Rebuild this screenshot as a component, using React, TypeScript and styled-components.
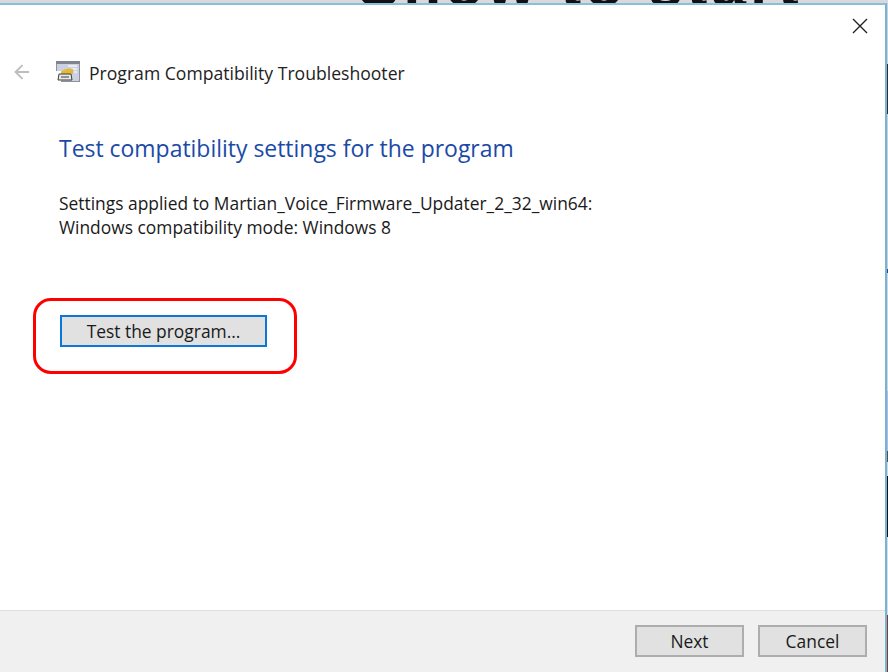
import { ArrowLeft } from 'lucide-react';
import styled, { createGlobalStyle } from 'styled-components';

type ButtonProps = {
  $focused?: boolean;
};

const stripPhotos = [
  { height: 61, color: '#d2d2d2' },
  { height: 50, color: '#3a2c22' },
  { height: 155, color: '#cfcfcf' },
  { height: 4, color: '#2f4a78' },
  { height: 118, color: '#d6d6d6' },
  { height: 60, color: '#b9b8d8' },
  { height: 11, color: '#5c4c44' },
  { height: 14, color: '#d8d8d8' },
  { height: 61, color: '#140f0c' },
  { height: 78, color: '#dcdcdc' },
  { height: 61, color: '#8a3a26' },
];

function App() {
  return (
    <Page>
      <GlobalStyle />
      <TopStrip>
        <TopStripText>Show to start</TopStripText>
      </TopStrip>
      <Middle>
        <Dialog>
          <Content>
            <CloseRow>
              <CloseIcon viewBox="0 0 16 16">
                <path d="M1 1 L15 15 M15 1 L1 15" />
              </CloseIcon>
            </CloseRow>
            <NavRow>
              <BackArrow>
                <ArrowLeft size={22} strokeWidth={2} color="#bdbdbd" />
              </BackArrow>
              <ProgramIcon viewBox="0 0 24 21">
                <rect x="0.5" y="0.5" width="23" height="20" fill="#ccd1e2" stroke="#8d919b" />
                <rect x="0" y="0" width="24" height="3" fill="#7f848e" />
                <path d="M12 5 L21 5 M15 8 L21 8 M18 11 L21 11" stroke="#f2f3fa" strokeWidth="1.5" />
                <rect x="0" y="10" width="5" height="11" fill="#fff" />
                <path d="M5 11 Q10 6 17 8 L17 13 L5 13 Z" fill="#e3b93a" />
                <path d="M3 13 L15 13 L16 19 L2 19 Z" fill="#e9e9e9" stroke="#3c3c3c" />
                <path d="M5 16 L13 16" stroke="#3c3c3c" />
              </ProgramIcon>
              <NavTitle>Program Compatibility Troubleshooter</NavTitle>
            </NavRow>
            <Heading>Test compatibility settings for the program</Heading>
            <Details>
              <div>Settings applied to Martian_Voice_Firmware_Updater_2_32_win64:</div>
              <div>Windows compatibility mode: Windows 8</div>
            </Details>
            <TestArea>
              <Annotation />
              <TestButton $focused>Test the program...</TestButton>
            </TestArea>
          </Content>
          <Footer>
            <FooterButton>Next</FooterButton>
            <FooterButton>Cancel</FooterButton>
          </Footer>
        </Dialog>
        <SideStrip>
          {stripPhotos.map((photo, i) => (
            <SidePhoto key={i} style={{ height: photo.height, background: photo.color }} />
          ))}
        </SideStrip>
      </Middle>
    </Page>
  );
}

const GlobalStyle = createGlobalStyle`
  html, body {
    margin: 0;
    padding: 0;
    background: #fff;
  }
`;

const Page = styled.div`
  display: flex;
  flex-direction: column;
  width: 888px;
  height: 672px;
  overflow: hidden;
  font-family: 'Open Sans', 'Noto Sans', sans-serif;
`;

const TopStrip = styled.div`
  flex: none;
  height: 3px;
  background: #d9d9d9;
  overflow: hidden;
  position: relative;
`;

const TopStripText = styled.div`
  position: absolute;
  left: 358px;
  bottom: -13px;
  font: bold 62px/62px 'Liberation Sans', sans-serif;
  letter-spacing: 4px;
  color: #111;
  white-space: nowrap;
`;

const Middle = styled.div`
  flex: 1;
  display: flex;
  min-height: 0;
`;

const Dialog = styled.div`
  flex: none;
  width: 885px;
  display: flex;
  flex-direction: column;
  border-top: 2px solid #85c1de;
  border-right: 2px solid #74b4d8;
  background: #fff;
`;

const Content = styled.div`
  flex: 1;
  min-height: 0;
`;

const CloseRow = styled.div`
  display: flex;
  justify-content: flex-end;
  padding: 13px 17px 0 0;
`;

const CloseIcon = styled.svg`
  width: 16px;
  height: 16px;
  fill: none;
  stroke: #222;
  stroke-width: 1.4;
`;

const NavRow = styled.div`
  display: flex;
  align-items: center;
  margin-top: 26px;
  padding-left: 11px;
  height: 26px;
`;

const BackArrow = styled.span`
  display: flex;
  margin-bottom: 2px;
`;

const ProgramIcon = styled.svg`
  width: 24px;
  height: 21px;
  margin: 0 0 4px 23px;
`;

const NavTitle = styled.span`
  margin-left: 9px;
  font-size: 17.6px;
  color: #222;
`;

const Heading = styled.h1`
  margin: 46px 0 0 59px;
  font-size: 22.95px;
  line-height: 32px;
  font-weight: 400;
  color: #1b4aa6;
`;

const Details = styled.div`
  margin: 28px 0 0 59px;
  font-size: 17.4px;
  line-height: 23.5px;
  color: #1a1a1a;
`;

const TestArea = styled.div`
  position: relative;
  margin: 76px 0 0 60px;
`;

const Annotation = styled.div`
  position: absolute;
  left: -27px;
  top: -17px;
  width: 258px;
  height: 70px;
  border: 3px solid #f00;
  border-radius: 18px;
`;

const ButtonBase = styled.button<ButtonProps>`
  font-family: inherit;
  font-size: 17.4px;
  color: #1a1a1a;
  background: #e1e1e1;
  padding: 0;
`;

const TestButton = styled(ButtonBase)`
  display: block;
  width: 207px;
  height: 32px;
  border: 2px solid ${(props) => (props.$focused ? '#0b78d7' : '#adadad')};
`;

const Footer = styled.div`
  flex: none;
  display: flex;
  justify-content: flex-end;
  gap: 14px;
  height: 62px;
  padding: 14px 18px 0 0;
  box-sizing: border-box;
  background: #f0f0f0;
  border-top: 1px solid #dfdfdf;
`;

const FooterButton = styled(ButtonBase)`
  width: 109px;
  height: 32px;
  border: 2px solid #adadad;
`;

const SideStrip = styled.div`
  flex: 1;
  display: flex;
  flex-direction: column;
  background: #cfcfcf;
`;

const SidePhoto = styled.div`
  flex: none;
`;

export default App;
